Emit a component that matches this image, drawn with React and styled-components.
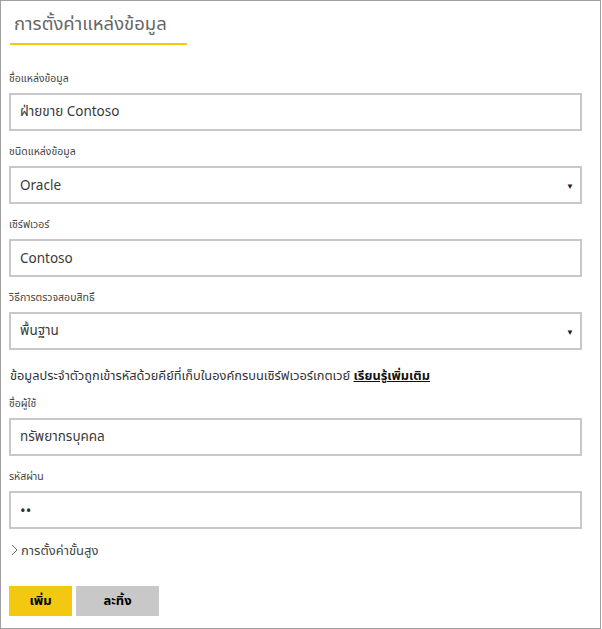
import React from "react";
import styled, { createGlobalStyle } from "styled-components";

const Global = createGlobalStyle`
  html, body { margin: 0; padding: 0; background: #fff; }
  body { font-family: "Segoe UI", "Noto Sans", "Noto Sans Thai", sans-serif; color: #333; }
  * { box-sizing: border-box; }
`;

const Frame = styled.div`
  width: 601px;
  height: 629px;
  border: 1px solid #a0a0a0;
  background: #fff;
  display: flex;
  flex-direction: column;
`;

const Header = styled.div`
  padding: 0 0 0 9px;
  height: 44px;
  display: flex;
  align-items: flex-end;
`;

const Title = styled.h1`
  margin: 0;
  width: 177px;
  padding: 0 0 6px 4px;
  border-bottom: 2px solid #f2c811;
  font-size: 18.5px;
  line-height: 28px;
  font-weight: 400;
  color: #666;
  white-space: nowrap;
`;

const Form = styled.div`
  padding: 25px 18px 0 8px;
  display: flex;
  flex-direction: column;
`;

const Field = styled.div`
  display: flex;
  flex-direction: column;
  margin-top: ${(p) => p.$mt ?? 12}px;
`;

const Label = styled.label`
  font-size: 10.5px;
  line-height: 16px;
  height: 16px;
  color: #444;
  margin-bottom: 7px;
`;

const Box = styled.div`
  position: relative;
  height: 38px;
  border: 2px solid #c8c8c8;
  display: flex;
  align-items: center;
  padding: 0 9px;
  font-size: 13.5px;
  color: #3a3a3a;
`;

const Caret = styled.span`
  position: absolute;
  right: 6px;
  top: 50%;
  transform: translateY(-50%);
  font-size: 8px;
  color: #222;
`;

const Dots = styled.span`
  font-size: 15px;
  color: #333;
`;

const Info = styled.p`
  margin: 14px 0 -3px 1px;
  font-size: 12.8px;
  line-height: 22px;
  color: #333;
  white-space: nowrap;
`;

const LearnMore = styled.a`
  color: #111;
  font-weight: 700;
  text-decoration: underline;
`;

const Advanced = styled.div`
  margin-top: 11px;
  display: flex;
  align-items: center;
  gap: 3px;
  padding-left: 2px;
  font-size: 13px;
  line-height: 20px;
  color: #444;
`;

const Buttons = styled.div`
  margin-top: 26px;
  display: flex;
  gap: 4px;
`;

const Button = styled.button`
  height: 30px;
  width: ${(p) => p.$w}px;
  border: 1px solid ${(p) => (p.$primary ? "#f2c811" : "#c8c8c8")};
  background: ${(p) => (p.$primary ? "#f2c811" : "#c8c8c8")};
  font-family: inherit;
  font-size: 13px;
  font-weight: 700;
  color: #000;
  padding: 0;
`;

function Input({ label, children, select, mt }) {
  return (
    <Field $mt={mt}>
      <Label>{label}</Label>
      <Box>
        {children}
        {select && <Caret>▼</Caret>}
      </Box>
    </Field>
  );
}

export default function App() {
  return (
    <>
      <Global />
      <Frame>
        <Header>
          <Title>การตั้งค่าแหล่งข้อมูล</Title>
        </Header>
        <Form>
          <Input label="ชื่อแหล่งข้อมูล" mt={0}>ฝ่ายขาย Contoso</Input>
          <Input label="ชนิดแหล่งข้อมูล" select>Oracle</Input>
          <Input label="เซิร์ฟเวอร์">Contoso</Input>
          <Input label="วิธีการตรวจสอบสิทธิ์" select>พื้นฐาน</Input>
          <Info>
            ข้อมูลประจำตัวถูกเข้ารหัสด้วยคีย์ที่เก็บในองค์กรบนเซิร์ฟเวอร์เกตเวย์{" "}
            <LearnMore>เรียนรู้เพิ่มเติม</LearnMore>
          </Info>
          <Input label="ชื่อผู้ใช้">ทรัพยากรบุคคล</Input>
          <Input label="รหัสผ่าน"><Dots>••</Dots></Input>
          <Advanced>
            <svg width="7" height="12" viewBox="0 0 7 12">
              <path d="M1 1l5 5-5 5" fill="none" stroke="#666" strokeWidth="1" />
            </svg>
            การตั้งค่าขั้นสูง
          </Advanced>
          <Buttons>
            <Button $primary $w={63}>เพิ่ม</Button>
            <Button $w={83}>ละทิ้ง</Button>
          </Buttons>
        </Form>
      </Frame>
    </>
  );
}
